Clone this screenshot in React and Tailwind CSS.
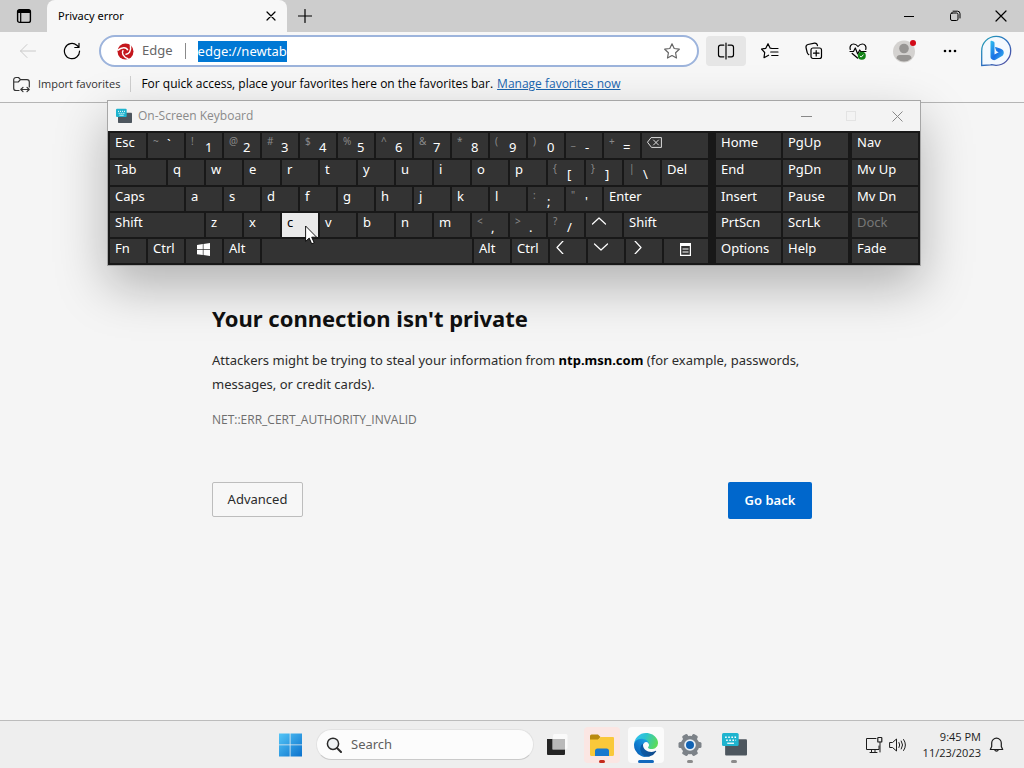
import React, { useEffect, useRef } from "react";

const line = {
  fill: "none",
  stroke: "currentColor",
  strokeWidth: 1.2,
  strokeLinecap: "round",
  strokeLinejoin: "round",
};

/* ---------- browser chrome ---------- */

function TitleBar() {
  return (
    <header className="flex h-8 items-stretch bg-[#cdcdcd]">
      <button aria-label="Tab actions" className="flex w-[47px] items-center justify-center">
        <svg width="16" height="16" viewBox="0 0 16 16">
          <rect x="1.6" y="1.6" width="12.8" height="12.8" rx="2" {...line} strokeWidth="1.4" />
          <path d="M1.5 5V3.5a2 2 0 0 1 2-2h9a2 2 0 0 1 2 2V5z" fill="#000" />
          <path d="M4.7 4.5v9.8" {...line} />
        </svg>
      </button>
      <div className="flex w-60 items-center rounded-t-lg bg-[#f7f7f7] pr-1.5 pl-[11px]">
        <span className="flex-1 text-[11px]">Privacy error</span>
        <button aria-label="Close tab" className="flex h-5 w-5 items-center justify-center">
          <svg width="10" height="10" viewBox="0 0 10 10">
            <path d="M1 1l8 8M9 1l-8 8" {...line} />
          </svg>
        </button>
      </div>
      <button aria-label="New tab" className="flex w-9 items-center justify-center">
        <svg width="14" height="14" viewBox="0 0 14 14">
          <path d="M7 .5v13M.5 7h13" {...line} />
        </svg>
      </button>
      <div className="flex-1" />
      <button aria-label="Minimize" className="flex w-[46px] items-center justify-center">
        <svg width="10" height="10" viewBox="0 0 10 10">
          <path d="M0 5.5h10" stroke="#000" />
        </svg>
      </button>
      <button aria-label="Restore" className="flex w-[46px] items-center justify-center">
        <svg width="12" height="12" viewBox="0 0 12 12">
          <rect x="1.500" y="3" width="7.5" height="7.5" rx="1.5" {...line} strokeWidth="1" />
          <path d="M4 1.2h4.500a2.500 2.500 0 0 1 2.500 2.500V8" {...line} strokeWidth="1" />
        </svg>
      </button>
      <button aria-label="Close" className="flex w-[46px] items-center justify-center">
        <svg width="12" height="12" viewBox="0 0 12 12">
          <path d="M1 1l10 10M11 1L1 11" {...line} />
        </svg>
      </button>
    </header>
  );
}

const blade = "M10.800 7.200C9.600 4.200 5.200 3.400 .6 7.400";

function AddressBar() {
  const ref = useRef(null);
  useEffect(() => {
    ref.current.focus();
    ref.current.select();
  }, []);
  return (
    <div className="flex h-8 flex-1 items-center rounded-full border-2 border-[#9db4dc] bg-white px-4">
      <svg width="17" height="17" viewBox="0 0 17 17" aria-hidden="true">
        <circle cx="8.5" cy="8.5" r="8" fill="#c4161c" />
        <g fill="none" stroke="#fff" strokeWidth="1.5">
          <path d={blade} />
          <path d={blade} transform="rotate(120 8.5 8.5)" />
          <path d={blade} transform="rotate(240 8.5 8.5)" />
        </g>
      </svg>
      <span className="ml-2 text-[13px] text-[#666]">Edge</span>
      <span className="mx-3 h-4 w-px bg-[#8a8a8a]" />
      <input
        ref={ref}
        aria-label="Address"
        defaultValue="edge://newtab"
        className="min-w-0 flex-1 bg-transparent text-[13px] leading-[21px] outline-none selection:bg-[#0078d4] selection:text-white"
      />
      <button aria-label="Add to favorites" className="text-[#666]">
        <svg width="18" height="18" viewBox="0 0 18 18">
          <path d="M9 1.800l2.200 4.700 5.100.7-3.700 3.600.9 5.200L9 13.500 4.500 16l.9-5.200L1.700 7.200l5.100-.7z" {...line} />
        </svg>
      </button>
    </div>
  );
}

function BingLogo() {
  return (
    <svg width="32" height="32" viewBox="0 0 32 32">
      <defs>
        <linearGradient id="ring" x1="0" y1="0" x2="1" y2="1">
          <stop offset="0" stopColor="#25a5b5" />
          <stop offset="0.5" stopColor="#2a6fc0" />
          <stop offset="1" stopColor="#5a4a9c" />
        </linearGradient>
        <linearGradient id="bee" x1="0" y1="0" x2="1" y2="1">
          <stop offset="0" stopColor="#2fc2f0" />
          <stop offset="0.55" stopColor="#1b6fe4" />
          <stop offset="1" stopColor="#38bdf0" />
        </linearGradient>
      </defs>
      <path d="M1.700 30.500V16A14.500 14.500 0 1 1 16 30.300q-1.500 0-3-.4-1.200-.3-2.500 0z" fill="#f4f9fe" stroke="url(#ring)" strokeWidth="1.300" />
      <path d="M10.500 6.500q0-1 1-.8l2 .7q1 .4 1 1.500v11.700l4.200-2.400-1.700-.8q-.6-.3-.9-1l-1-2.600q-.3-1 .7-.8l5 1.800c2 .8 3 2.200 3 3.900 0 1.600-.8 2.800-2.200 3.600l-6 3.500q-1.500.8-3 0l-1.100-.7q-1-.7-1-2z" fill="url(#bee)" />
    </svg>
  );
}

function Toolbar() {
  return (
    <div className="flex h-[38px] items-center bg-[#f7f7f7] pr-[5px] pl-1.5">
      <button aria-label="Back" disabled className="flex w-11 items-center justify-center text-[#cacaca]">
        <svg width="18" height="16" viewBox="0 0 18 16">
          <path d="M8 1.5L1.500 8 8 14.500M1.500 8h15" {...line} strokeWidth="1" />
        </svg>
      </button>
      <button aria-label="Refresh" className="flex w-11 items-center justify-center">
        <svg width="18" height="18" viewBox="0 0 18 18">
          <path d="M16.600 9A7.600 7.600 0 1 1 13.800 3.200L16 5.300M16 1.300v4.200h-4.200" {...line} />
        </svg>
      </button>
      <div className="ml-[5px] flex flex-1">
        <AddressBar />
      </div>
      <div className="ml-[7px] flex items-center gap-1">
        <button aria-label="Split screen" className="flex h-[30px] w-10 items-center justify-center rounded bg-[#e6e6e6]">
          <svg width="18" height="18" viewBox="0 0 18 18">
            <path d="M9 1v16M6.800 3.200H3.500a2 2 0 0 0-2 2v7.600a2 2 0 0 0 2 2h3.300M11.200 3.200h3.300a2 2 0 0 1 2 2v7.600a2 2 0 0 1-2 2h-3.300" {...line} />
          </svg>
        </button>
        <button aria-label="Favorites" className="flex h-[30px] w-10 items-center justify-center">
          <svg width="18" height="18" viewBox="0 0 18 18">
            <path d="M11 6.500L9.200 6.200 7 1.700 4.800 6.300l-4.300.7 3.200 3.500-.7 5.200 4.600-2.500M11 6.500h6M9.700 10H17M10.700 13.500H17" {...line} />
          </svg>
        </button>
        <button aria-label="Collections" className="flex h-[30px] w-10 items-center justify-center">
          <svg width="18" height="18" viewBox="0 0 18 18">
            <rect x="6" y="6" width="10.500" height="10.500" rx="2" {...line} />
            <path d="M11.200 8.500v5.500M8.500 11.200H14M3.800 12.600Q2.500 12 2.200 10.500L1 5.500Q.7 3 3 2.500L9.500 1.200Q12 1 12.500 3.600" {...line} />
          </svg>
        </button>
        <button aria-label="Browser essentials" className="flex h-[30px] w-10 items-center justify-center">
          <svg width="18" height="18" viewBox="0 0 18 18">
            <path d="M1.300 7.500C.4 4.500 2 2 4.600 2 6.700 2 8 3.200 9 4.500 10 3.200 11.300 2 13.400 2c2.600 0 4.200 2.500 3.300 5.500M1 9.500h3.500L6.300 6l2.400 6 2-4 1 1.500H17M3.200 11.500L8.500 16" {...line} />
            <circle cx="12.800" cy="13.700" r="4" fill="#128316" />
            <path d="M11 13.900l1.200 1.200 2.300-2.500" stroke="#fff" fill="none" />
          </svg>
        </button>
      </div>
      <button aria-label="Profile" className="ml-[3px] flex w-[46px] items-center justify-center">
        <svg width="24" height="24" viewBox="0 0 24 24">
          <circle cx="12" cy="12.500" r="11" fill="#d4d2d0" />
          <circle cx="12" cy="9.500" r="4.800" fill="#979593" />
          <path d="M4.500 19.500q0-3.500 3.500-3.500h8q3.500 0 3.500 3.500a11 11 0 0 1-15 0z" fill="#979593" />
          <circle cx="21" cy="4" r="3" fill="#d20a18" />
        </svg>
      </button>
      <button aria-label="Settings and more" className="flex w-[46px] items-center justify-center">
        <svg width="14" height="4" viewBox="0 0 14 4">
          <circle cx="2" cy="2" r="1.300" />
          <circle cx="7" cy="2" r="1.300" />
          <circle cx="12" cy="2" r="1.300" />
        </svg>
      </button>
      <button aria-label="Bing" className="flex w-[46px] items-center justify-center">
        <BingLogo />
      </button>
    </div>
  );
}

function FavoritesBar() {
  return (
    <div className="flex h-[33px] items-center border-b border-[#b5b5b5] bg-[#f7f7f7] pb-1 pl-3 font-['Open_Sans','Noto_Sans',sans-serif] text-xs">
      <button className="flex items-center gap-[7px] text-[11px] text-[#333]">
        <svg width="19" height="17" viewBox="0 0 19 17">
          <path d="M7 14.500H4A2.300 2.300 0 0 1 1.700 12.200V3.800A2.300 2.300 0 0 1 4 1.500h2.500L8.500 3.700H15A2.300 2.300 0 0 1 17.300 6v5M1.700 6h4.500l2.300-2.300M9 13.500h8M11 11.300l-2.200 2.200 2.200 2.200M15 11.300l2.200 2.200-2.200 2.200" {...line} />
        </svg>
        Import favorites
      </button>
      <span className="mx-[10px] h-4 w-px bg-[#cfcfcf]" />
      <span>For quick access, place your favorites here on the favorites bar.</span>
      <a href="#favorites" className="ml-1 text-[#1a66b0] underline">
        Manage favorites now
      </a>
    </div>
  );
}

/* ---------- on-screen keyboard ---------- */

const chevrons = {
  up: "M1.500 9L8 3l6.500 6",
  down: "M1.500 3L8 9l6.500-6",
  left: "M8 0L2 6.500 8 13",
  right: "M4 0l6 6.500L4 13",
};

function Chevron({ dir }) {
  return (
    <svg width="16" height="13" viewBox="0 0 16 13" className="mt-0.5">
      <path d={chevrons[dir]} {...line} />
    </svg>
  );
}

const Backspace = () => (
  <svg width="15" height="11" viewBox="0 0 15 11" className="mt-1 text-[#dddddd]">
    <path d="M4.500 .6h9.900v9.800H4.500L.7 5.500zM6.500 3l5 5M11.500 3l-5 5" {...line} strokeWidth="1" />
  </svg>
);

const WinKey = () => (
  <svg width="13" height="13" viewBox="0 0 13 13" fill="#fff" className="mt-1 ml-1.5">
    <path d="M0 1.900l5.800-.9v5.200H0zM6.500.9L13 0v6.200H6.500zM0 6.900h5.800V12L0 11.200zM6.500 6.900H13V13l-6.500-.9z" />
  </svg>
);

const MenuKey = () => (
  <svg width="11" height="13" viewBox="0 0 11 13" className="mt-1 ml-[11px]">
    <path d="M0 0h11v3H0z" fill="#fff" />
    <path d="M.6 2v10.400h9.800V2M2.500 6h6M2.500 9h6" fill="none" stroke="#fff" strokeWidth="1.200" />
  </svg>
);

const Cursor = () => (
  <svg width="13" height="20" viewBox="0 0 13 20" className="absolute top-3 left-[23px] z-10">
    <path d="M.6 1v15.400l3.600-3.300 2.500 5.700 2.500-1.100-2.500-5.500h4.900z" fill="#fff" stroke="#000" strokeWidth="0.900" />
  </svg>
);

const K = (label, w = "w-9") => ({ label, w });
const D = (shift, label) => ({ shift, label, w: "w-9" });
const letters = (s) => [...s].map((c) => K(c));

const rows = [
  [K("Esc"), { shift: "~", label: "`", w: "w-9", high: true }, D("!", "1"), D("@", "2"), D("#", "3"), D("$", "4"), D("%", "5"), D("^", "6"), D("&", "7"), D("*", "8"), D("(", "9"), D(")", "0"), D("_", "-"), D("+", "="), { label: <Backspace />, w: "flex-1", name: "Backspace" }],
  [K("Tab", "w-14"), ...letters("qwertyuiop"), D("{", "["), D("}", "]"), D("|", "\\"), K("Del", "flex-1")],
  [K("Caps", "w-[74px]"), ...letters("asdfghjkl"), D(":", ";"), D('"', "'"), K("Enter", "flex-1")],
  [K("Shift", "w-[94px]"), ...letters("zxcvbnm"), D("<", ","), D(">", "."), D("?", "/"), { label: <Chevron dir="up" />, w: "w-9", name: "Up" }, K("Shift", "flex-1")],
  [K("Fn"), K("Ctrl"), { label: <WinKey />, w: "w-9", name: "Windows" }, K("Alt"), { label: "", w: "flex-1", name: "Space" }, K("Alt"), K("Ctrl"), { label: <Chevron dir="left" />, w: "w-9", name: "Left" }, { label: <Chevron dir="down" />, w: "w-9", name: "Down" }, { label: <Chevron dir="right" />, w: "w-9", name: "Right" }, { label: <MenuKey />, w: "w-11", name: "Menu" }],
];

const navRows = [
  ["Home", "PgUp"],
  ["End", "PgDn"],
  ["Insert", "Pause"],
  ["PrtScn", "ScrLk"],
  ["Options", "Help"],
];
const sideKeys = ["Nav", "Mv Up", "Mv Dn", "Dock", "Fade"];

const keyBase = "relative flex items-start pl-[5px] text-left leading-[19px]";

function Key({ k }) {
  const pressed = k.label === "c";
  return (
    <button
      aria-label={k.name}
      className={`${keyBase} ${k.w} ${pressed ? "bg-[#e9e9e9] text-black" : "bg-[#333]"}`}
    >
      {k.shift ? (
        <>
          <span className="w-[14px] text-[10px] leading-[17px] text-[#8a8a8a]">{k.shift}</span>
          <span className={k.high ? "mt-0.5" : "mt-[5px]"}>{k.label}</span>
        </>
      ) : (
        k.label
      )}
      {pressed && <Cursor />}
    </button>
  );
}

function OnScreenKeyboard() {
  return (
    <section
      aria-label="On-Screen Keyboard"
      className="absolute top-[100px] left-[107px] w-[814px] border border-[#a6a6a6] bg-[#f3f3f3] shadow-[0_20px_48px_rgba(0,0,0,0.28)]"
    >
      <div className="flex h-[30px] items-center pl-2 text-xs text-[#8a8a8a]">
        <KeyboardIcon size={16} />
        <span className="ml-1.5 flex-1 font-['Open_Sans','Noto_Sans',sans-serif]">On-Screen Keyboard</span>
        <button aria-label="Minimize keyboard" className="flex w-[46px] justify-center">
          <svg width="11" height="11" viewBox="0 0 11 11"><path d="M0 5.500h11" stroke="#888" /></svg>
        </button>
        <button aria-label="Maximize keyboard" disabled className="flex w-[45px] justify-center">
          <svg width="11" height="11" viewBox="0 0 11 11"><rect x=".5" y=".5" width="9" height="9" fill="none" stroke="#e3e3e3" /></svg>
        </button>
        <button aria-label="Close keyboard" className="flex w-[46px] justify-center">
          <svg width="11" height="11" viewBox="0 0 11 11"><path d="M.5 .5l10 10M10.500 .5l-10 10" stroke="#888" /></svg>
        </button>
      </div>
      <div className="flex bg-[#181818] p-0.5 text-[13px] text-white">
        <div className="grid flex-1 grid-rows-[25px_25px_24px_24px_24px] gap-0.5">
          {rows.map((row, i) => (
            <div key={i} className="flex gap-0.5">
              {row.map((k, j) => (
                <Key key={j} k={k} />
              ))}
            </div>
          ))}
        </div>
        <div className="ml-2 grid w-[132px] grid-cols-2 grid-rows-[25px_25px_24px_24px_24px] gap-0.5">
          {navRows.flat().map((label) => (
            <button key={label} className={`${keyBase} bg-[#333]`}>
              {label}
            </button>
          ))}
        </div>
        <div className="ml-1 grid w-[66px] grid-rows-[25px_25px_24px_24px_24px] gap-0.5">
          {sideKeys.map((label) => (
            <button
              key={label}
              disabled={label === "Dock"}
              className={`${keyBase} bg-[#333] ${label === "Dock" ? "text-[#777]" : ""}`}
            >
              {label}
            </button>
          ))}
        </div>
      </div>
    </section>
  );
}

/* ---------- page ---------- */

function PrivacyPage() {
  return (
    <main className="flex-1 bg-[#f5f5f5] px-6 pt-[197px]">
      <div className="mx-auto max-w-[600px]">
        <h1 className="text-[22px] leading-9 font-bold text-[#101010]">Your connection isn't private</h1>
        <p className="mt-3 text-[13px] leading-6 text-[#2b2b2b]">
          Attackers might be trying to steal your information from{" "}
          <strong className="font-bold text-black">ntp.msn.com</strong> (for example, passwords, messages, or credit cards).
        </p>
        <p className="mt-3 font-['Open_Sans','Noto_Sans',sans-serif] text-xs leading-6 text-[#6e6e6e]">
          NET::ERR_CERT_AUTHORITY_INVALID
        </p>
        <div className="mt-[50px] flex items-start justify-between">
          <button className="h-[35px] w-[91px] rounded-xs border border-[#bdbdbd] bg-[#f7f7f7] text-[13px] text-[#2b2b2b]">
            Advanced
          </button>
          <button className="h-[37px] w-[84px] rounded-xs bg-[#0067cc] text-[13px] font-semibold text-white">
            Go back
          </button>
        </div>
      </div>
    </main>
  );
}

/* ---------- taskbar ---------- */

function KeyboardIcon({ size }) {
  return (
    <svg width={size} height={size} viewBox="0 0 24 24" aria-hidden="true">
      <path d="M4 7h19a1 1 0 0 1 1 1v13.500a1 1 0 0 1-1 1H4a1 1 0 0 1-1-1V8a1 1 0 0 1 1-1z" fill="#4d565e" />
      <rect x="0" y="1" width="16" height="12.500" rx="1.500" fill="#1fb4cf" />
      <path d="M3 5h10.500M4 8h9.500" stroke="#fff" strokeWidth="1.500" strokeDasharray="1.500 1.500" />
      <path d="M5 10.800h6.500" stroke="#fff" strokeWidth="1.200" />
    </svg>
  );
}

function EdgeIcon() {
  return (
    <svg width="24" height="24" viewBox="0 0 256 256">
      <defs>
        <linearGradient id="e1" x1="0.200" y1="0.500" x2="1" y2="0.600">
          <stop offset="0" stopColor="#0c59a4" />
          <stop offset="1" stopColor="#114a8b" />
        </linearGradient>
        <linearGradient id="e2" x1="0.800" y1="0.200" x2="0.200" y2="0.900">
          <stop offset="0" stopColor="#1b9de2" />
          <stop offset="0.600" stopColor="#0f78cc" />
          <stop offset="1" stopColor="#0b63b8" />
        </linearGradient>
        <linearGradient id="e3" x1="0" y1="0.300" x2="1" y2="0.600">
          <stop offset="0" stopColor="#35c1f1" />
          <stop offset="0.400" stopColor="#2bc3d2" />
          <stop offset="1" stopColor="#5fdc55" />
        </linearGradient>
      </defs>
      <path fill="url(#e1)" d="M231 190.500a94 94 0 0 1-10.500 4.700 102 102 0 0 1-36 6.500c-47.300 0-88.500-32.600-88.500-74.300a31.500 31.500 0 0 1 16.400-27.300c-42.800 1.800-53.800 46.400-53.800 72.500 0 73.900 68.100 81.400 82.800 81.400 7.900 0 19.800-2.300 27-4.600l1.300-.4a128 128 0 0 0 66.600-52.800 4 4 0 0 0-5.300-5.700z" />
      <path fill="url(#e2)" d="M105.700 241.400a79 79 0 0 1-22.700-21.300 80.700 80.700 0 0 1 29.500-120c3.100-1.500 8.500-4.100 15.500-4a32.400 32.400 0 0 1 25.700 13 32 32 0 0 1 6.300 18.700c0-.2 24.500-79.600-80-79.600-43.900 0-80 41.700-80 78.200a130 130 0 0 0 12.100 56 128 128 0 0 0 156.400 67.100 75.500 75.500 0 0 1-62.800-8z" />
      <path fill="url(#e3)" d="M152.300 148.900c-.8 1-3.300 2.500-3.300 5.600 0 2.600 1.700 5.100 4.700 7.200 14.400 10 41.500 8.700 41.600 8.700a59.600 59.600 0 0 0 30.300-8.300A61.400 61.400 0 0 0 256 109.200c.3-22.400-8-37.300-11.300-43.900C223.500 23.800 177.700 0 128 0A128 128 0 0 0 0 126.200c.5-36.500 36.800-66 80-66 3.500 0 23.500.3 42 10 16.300 8.600 24.900 19 30.900 29.200 6.100 10.700 7.200 24.200 7.200 29.500s-2.700 13.400-7.800 20z" />
    </svg>
  );
}

function TaskButton({ label, mark, active, children }) {
  return (
    <button aria-label={label} className="relative flex h-11 w-11 items-center justify-center">
      <span className={`flex h-9 w-9 items-center justify-center rounded ${active || ""}`}>{children}</span>
      {mark && <span className={`absolute bottom-1 h-[3px] rounded-full ${mark}`} />}
    </button>
  );
}

function Taskbar() {
  return (
    <footer className="flex h-12 items-center border-t border-[#bcbcbc] bg-[#eeeeee]">
      <div className="flex-1" />
      <nav aria-label="Taskbar" className="flex items-center">
        <TaskButton label="Start">
          <svg width="24" height="24" viewBox="0 0 24 24">
            <defs>
              <linearGradient id="win" x1="0" y1="0" x2="24" y2="24" gradientUnits="userSpaceOnUse">
                <stop offset="0" stopColor="#56c8f8" />
                <stop offset="1" stopColor="#0a70cc" />
              </linearGradient>
            </defs>
            <path d="M1 .5h10.700v11H1zM12.500.5H24v11H12.500zM1 12.300h10.700v11.200H1zM12.500 12.300H24v11.200H12.500z" fill="url(#win)" />
          </svg>
        </TaskButton>
        <label className="ml-1 flex h-[31px] w-[218px] items-center rounded-full border border-[#e2e2e2] border-b-[#cacaca] bg-[#fcfcfc] pl-[9px]">
          <svg width="16" height="16" viewBox="0 0 16 16" aria-hidden="true">
            <circle cx="7" cy="6.800" r="5.600" fill="#eef1f3" stroke="#2a2a2a" strokeWidth="1.500" />
            <path d="M11 11l4 4" stroke="#2a2a2a" strokeWidth="2" strokeLinecap="round" />
          </svg>
          <input
            aria-label="Search"
            placeholder="Search"
            className="ml-[9px] w-40 bg-transparent text-[13px] outline-none placeholder:text-[#5f5f5f]"
          />
        </label>
        <TaskButton label="Task view">
          <svg width="24" height="22" viewBox="0 0 24 22">
            <rect x="9" y="0" width="14.500" height="15" rx="1.500" fill="#fafafa" />
            <path d="M3 5h5.500v10.500H21V20a1 1 0 0 1-1 1H4a1 1 0 0 1-1-1z" fill="#252525" />
            <rect x="9" y="5" width="12" height="10" fill="#b9b9b9" />
          </svg>
        </TaskButton>
        <div className="ml-0.5 flex">
          <TaskButton label="File Explorer" mark="w-1.5 bg-[#c42b1c]" active="bg-[#fbe6e3]">
            <svg width="26" height="24" viewBox="0 0 26 24">
              <path d="M1 3a1.500 1.500 0 0 1 1.500-1.500H9L11.500 4l-2.500 3H1z" fill="#b98a10" />
              <path d="M1 6.500h8L11.500 4H24a1 1 0 0 1 1 1v16.500a1.500 1.500 0 0 1-1.500 1.500h-21A1.500 1.500 0 0 1 1 21.500z" fill="#fac83a" />
              <path d="M6 23v-5a2.500 2.500 0 0 1 2.500-2.500h9A2.500 2.500 0 0 1 20 18v5z" fill="#1979ce" />
            </svg>
          </TaskButton>
          <TaskButton label="Microsoft Edge" mark="w-4 bg-[#1269bd]" active="bg-[#fbfbfb]">
            <EdgeIcon />
          </TaskButton>
          <TaskButton label="Settings" mark="w-1.5 bg-[#8b8b8b]">
            <svg width="24" height="24" viewBox="0 0 24 24">
              <g fill="#7c8288">
                <circle cx="12" cy="12" r="9.300" />
                <rect x="9" y="0.500" width="6" height="23" rx="1.500" transform="rotate(30 12 12)" />
                <rect x="9" y="0.500" width="6" height="23" rx="1.500" transform="rotate(90 12 12)" />
                <rect x="9" y="0.500" width="6" height="23" rx="1.500" transform="rotate(150 12 12)" />
              </g>
              <circle cx="12" cy="12" r="5.800" fill="#e9f1f8" />
              <circle cx="12" cy="12" r="4" fill="#1163b4" />
            </svg>
          </TaskButton>
          <TaskButton label="Keyboard" mark="w-1.5 bg-[#8b8b8b]">
            <KeyboardIcon size={25} />
          </TaskButton>
        </div>
      </nav>
      <div className="flex-1">
        <div className="flex items-center justify-end pr-5 text-[#1c1c1c]">
          <svg width="18" height="18" viewBox="0 0 18 18" aria-label="Network">
            <path d="M11 2.500H1.500v11H14V10M5 16.500h7M6.500 13.500v3M10 13.500v3M15 6v10" {...line} strokeWidth="1" />
            <rect x="12.800" y="1.500" width="4" height="4.500" rx="0.600" {...line} />
          </svg>
          <svg width="18" height="16" viewBox="0 0 18 16" className="ml-1.5" aria-label="Volume">
            <path d="M1 5.500h2.500L7.500 2v12l-4-3.500H1zM10 5.500q1.600 2.500 0 5M12.300 4q2.700 4 0 8M14.600 2.500q3.800 5.500 0 11" {...line} strokeWidth="1" />
          </svg>
          <div className="ml-4 text-right font-['Open_Sans','Noto_Sans',sans-serif] text-[11px] leading-4">
            <div>9:45 PM</div>
            <div>11/23/2023</div>
          </div>
          <button aria-label="Notifications" className="ml-2">
            <svg width="15" height="16" viewBox="0 0 15 16">
              <path d="M7.500 1.200A4.800 4.800 0 0 0 2.700 6v3.500L1.300 12.500h12.400l-1.400-3V6a4.800 4.800 0 0 0-4.800-4.800zM5.700 12.800a1.900 1.900 0 0 0 3.600 0" {...line} />
            </svg>
          </button>
        </div>
      </div>
    </footer>
  );
}

export default function App() {
  return (
    <div className="relative flex min-h-screen flex-col overflow-hidden bg-[#f5f5f5] font-['Noto_Sans','Open_Sans',sans-serif] text-black">
      <TitleBar />
      <Toolbar />
      <FavoritesBar />
      <PrivacyPage />
      <OnScreenKeyboard />
      <Taskbar />
    </div>
  );
}
